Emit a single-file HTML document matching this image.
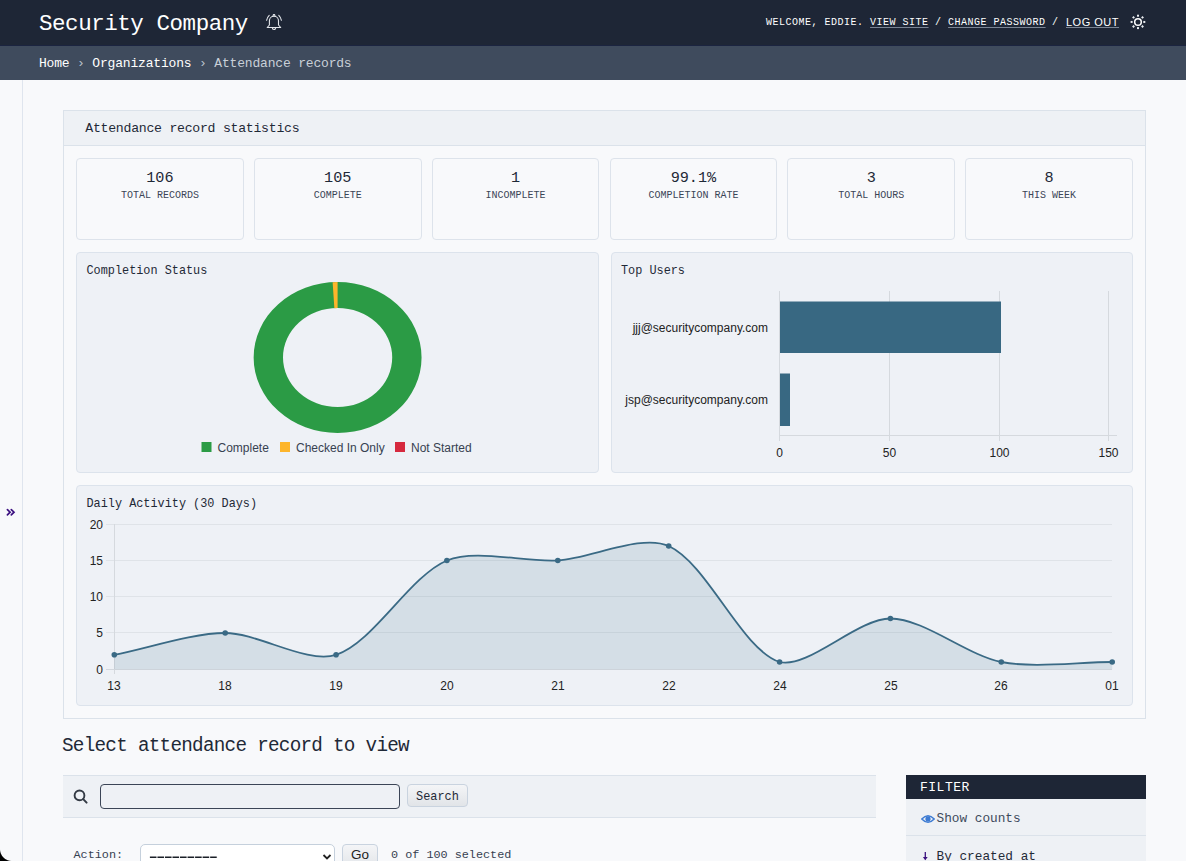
<!DOCTYPE html>
<html><head><meta charset="utf-8">
<style>
*{box-sizing:border-box;margin:0;padding:0}
html,body{width:1186px;height:861px;overflow:hidden}
body{background:#f8f9fb;font-family:"Liberation Mono",monospace;color:#1f2937;position:relative}
.abs{position:absolute}
#header{left:0;top:0;width:1186px;height:46px;background:#1e2636;border-bottom:1px solid #1b2440}
#brand{left:39px;top:10px;font-size:22.5px;letter-spacing:-0.45px;color:#fff;white-space:nowrap;line-height:28px}
#usertools{left:766px;top:16px;font-size:10px;letter-spacing:0.5px;color:#fff;white-space:nowrap;line-height:14px}
#usertools a{color:#fff;text-decoration:underline;text-decoration-color:#7a8494;text-underline-offset:2px;text-decoration-thickness:1px}
#logout{left:1066px;top:15px;font-family:"Liberation Sans",sans-serif;font-size:11px;letter-spacing:0.5px;color:#fff;line-height:14px;text-decoration:underline;text-decoration-color:#7a8494;text-underline-offset:1px;text-decoration-thickness:1px;white-space:nowrap}
#crumbs{left:0;top:46px;width:1186px;height:34px;background:#3f4b5d}
#crumbtext{left:39px;top:56px;font-size:13px;letter-spacing:-0.18px;color:#fff;white-space:nowrap;line-height:16px}
#crumbtext .sep{color:#b9c1cc}
#crumbtext .cur{color:#c9d0d8}
#toggle{left:0;top:80px;width:23px;height:781px;border-right:1px solid #dfe5ee;background:#f8f9fb}
#tog{left:6px;top:503px;font-size:15px;font-weight:bold;color:#3c1280;line-height:18px}
#module{left:63px;top:110px;width:1083px;height:609px;border:1px solid #dbe2ea;background:#f8f9fb}
#modhead{left:0;top:0;width:1081px;height:35px;background:#eef1f5;border-bottom:1px solid #dbe2ea}
#modtitle{left:21.3px;top:10px;font-size:13.2px;color:#1f2937;line-height:16px;white-space:nowrap;letter-spacing:-0.27px}
.card{position:absolute;top:47px;width:167.83px;height:82px;border:1px solid #dde3eb;border-radius:4px;background:#f8f9fb;text-align:center}
.card .num{position:absolute;left:0;right:0;top:9.5px;font-size:15.2px;line-height:18px;color:#1f2937}
.card .lbl{position:absolute;left:0;right:0;top:30.5px;font-size:10px;line-height:12px;color:#3b4556}
.ccard{position:absolute;border:1px solid #dce3ec;border-radius:4px;background:#eef1f6}
.ctitle{position:absolute;left:9.5px;top:11px;font-size:11.85px;line-height:14px;color:#1f2937;white-space:nowrap}
svg text{font-family:"Liberation Sans",sans-serif}
#h2{left:62px;top:734.5px;font-size:19.3px;letter-spacing:-0.73px;color:#1f2937;line-height:22px;white-space:nowrap}
#toolbar{left:63px;top:775px;width:813px;height:43px;background:#eef1f5;border-top:1px solid #dbe2ea;border-bottom:1px solid #dbe2ea}
#search{left:100px;top:784px;width:300px;height:25px;border:1px solid #3b4556;border-radius:4px;background:#eef1f5}
#sbtn{left:407px;top:784px;width:61px;height:23px;border:1px solid #c9d3df;border-radius:4px;background:linear-gradient(#f4f5f7,#e1e4e8);font-size:11.9px;line-height:25px;text-align:center;color:#1f2937}
#filter{left:906px;top:775px;width:240px;height:86px;background:#eef1f5}
#filhead{left:0;top:0;width:240px;height:24px;background:#1e2636;color:#fff;font-size:13px;letter-spacing:0.5px;line-height:26px;padding-left:14px}
#showc{left:30.5px;top:36px;font-size:12.75px;line-height:16px;color:#3d4a5c;white-space:nowrap}
#fsep{left:0;top:60px;width:240px;height:1px;background:#dbe2ea}
#bycr{left:30.5px;top:74px;font-size:12.75px;line-height:16px;color:#1f2937;white-space:nowrap}
#action{left:73.5px;top:846.7px;font-size:11.8px;color:#374151;line-height:16px;white-space:nowrap}
#select{left:140px;top:844px;width:195px;height:26px;border:1px solid #c5d0dc;border-radius:5px;background:#fff}
#gobtn{left:342px;top:844px;width:36px;height:26px;border:1px solid #c9d3df;border-radius:4px;background:linear-gradient(#f4f5f7,#e1e4e8)}
#selcount{left:391px;top:846.7px;font-size:11.8px;color:#374151;line-height:16px;white-space:nowrap}
</style></head>
<body>
<div id="header" class="abs"></div>
<div id="brand" class="abs">Security Company</div>
<svg class="abs" style="left:260px;top:8px" width="30" height="28" viewBox="0 0 30 28" fill="none" stroke="#e2e5ea" stroke-width="1.1" stroke-linecap="round" stroke-linejoin="round">
<path d="M9.4 17 V12.8 A4.55 4.55 0 0 1 18.5 12.8 V17 L20.7 19.5 H7.2 Z"/><path d="M12.9 8.4 L13.5 6.5 H14.5 L15.1 8.4"/><path d="M12.3 19.8 a1.7 1.7 0 0 0 3.4 0"/><path d="M9.2 7.3 Q7 9.5 6.6 12.3 M18.8 7.3 Q21 9.5 21.4 12.3"/>
</svg>
<div id="usertools" class="abs">WELCOME, <b style="font-weight:normal">EDDIE</b>. <a>VIEW SITE</a> / <a>CHANGE PASSWORD</a> / </div>
<div id="logout" class="abs">LOG OUT</div>
<svg class="abs" style="left:1128px;top:12px" width="20" height="20" viewBox="0 0 20 20">
<circle cx="10" cy="9.95" r="3.3" fill="none" stroke="#fff" stroke-width="1.5"/>
<g fill="#e8ebef"><rect x="9" y="2.7" width="2" height="2"/><rect x="9" y="15.1" width="2" height="2"/><rect x="2.6" y="8.95" width="2" height="2"/><rect x="15.3" y="8.95" width="2" height="2"/>
<rect x="4.5" y="4.4" width="2" height="2" transform="rotate(45 5.5 5.4)"/><rect x="13.5" y="4.4" width="2" height="2" transform="rotate(45 14.5 5.4)"/><rect x="4.5" y="13.5" width="2" height="2" transform="rotate(45 5.5 14.5)"/><rect x="13.5" y="13.5" width="2" height="2" transform="rotate(45 14.5 14.5)"/></g>
</svg>
<div id="crumbs" class="abs"></div>
<div id="crumbtext" class="abs">Home <span class="sep">›</span> Organizations <span class="sep">›</span> <span class="cur">Attendance records</span></div>
<div id="toggle" class="abs"></div>
<svg class="abs" style="left:0;top:500px" width="22" height="22" viewBox="0 0 22 22"><path d="M7.4 9.6 L10.1 12.2 L7.4 14.8 M11.3 9.6 L14 12.2 L11.3 14.8" fill="none" stroke="#3b1080" stroke-width="1.7" stroke-linecap="round" stroke-linejoin="miter"/></svg>

<div id="module" class="abs">
 <div id="modhead" class="abs"><div id="modtitle" class="abs">Attendance record statistics</div></div>
 <div class="card" style="left:12px"><div class="num">106</div><div class="lbl">TOTAL RECORDS</div></div>
 <div class="card" style="left:189.83px"><div class="num">105</div><div class="lbl">COMPLETE</div></div>
 <div class="card" style="left:367.67px"><div class="num">1</div><div class="lbl">INCOMPLETE</div></div>
 <div class="card" style="left:545.5px"><div class="num">99.1%</div><div class="lbl">COMPLETION RATE</div></div>
 <div class="card" style="left:723.33px"><div class="num">3</div><div class="lbl">TOTAL HOURS</div></div>
 <div class="card" style="left:901.17px"><div class="num">8</div><div class="lbl">THIS WEEK</div></div>
 <div class="ccard" style="left:12px;top:141px;width:522.5px;height:221px"><div class="ctitle">Completion Status</div></div>
 <div class="ccard" style="left:546.5px;top:141px;width:522.5px;height:221px"><div class="ctitle">Top Users</div></div>
 <div class="ccard" style="left:12px;top:374px;width:1057px;height:221px"><div class="ctitle">Daily Activity (30 Days)</div></div>
</div>

<!-- charts overlay (page coords) -->
<svg class="abs" style="left:0;top:0" width="1186" height="861" viewBox="0 0 1186 861">
 <!-- donut -->
 <g>
  <path fill="#2b9b45" fill-rule="evenodd" d="M337.6 282.1 A83.9 75.4 0 1 1 337.6 432.9 A83.9 75.4 0 1 1 337.6 282.1 Z M337.6 308.1 A54.6 49.4 0 1 0 337.6 406.9 A54.6 49.4 0 1 0 337.6 308.1 Z"/>
  <path fill="#fdb52b" d="M332.63 282.23 A83.9 75.4 0 0 1 337.60 282.10 L337.60 308.10 A54.6 49.4 0 0 0 334.37 308.19 Z"/>
 </g>
 <!-- legend -->
 <rect x="201.5" y="442" width="10" height="10" fill="#2b9b45"/>
 <text x="217.5" y="451.5" font-size="12" fill="#374151">Complete</text>
 <rect x="280" y="442" width="10" height="10" fill="#fdb52b"/>
 <text x="296" y="451.5" font-size="12" fill="#374151">Checked In Only</text>
 <rect x="395" y="442" width="10" height="10" fill="#d6293e"/>
 <text x="411" y="451.5" font-size="12" fill="#374151">Not Started</text>

 <!-- bar chart -->
 <g stroke="#d5d9de" stroke-width="1">
  <line x1="779.5" y1="291" x2="779.5" y2="441"/>
  <line x1="889.5" y1="291" x2="889.5" y2="441"/>
  <line x1="999.5" y1="291" x2="999.5" y2="441"/>
  <line x1="1108.5" y1="291" x2="1108.5" y2="441"/>
  <line x1="779" y1="435.5" x2="1117" y2="435.5"/>
 </g>
 <rect x="780" y="301.5" width="221" height="51.5" fill="#386882"/>
 <rect x="780" y="373.5" width="10" height="52.5" fill="#386882"/>
 <text x="768" y="331.5" font-size="12" fill="#222" text-anchor="end">jjj@securitycompany.com</text>
 <text x="768" y="403.5" font-size="12" fill="#222" text-anchor="end">jsp@securitycompany.com</text>
 <g font-size="12" fill="#222" text-anchor="middle">
  <text x="779.5" y="456.5">0</text><text x="889.5" y="456.5">50</text><text x="999.5" y="456.5">100</text><text x="1108.5" y="456.5">150</text>
 </g>

 <!-- line chart -->
 <g stroke="#dfe3e8" stroke-width="1">
  <line x1="106" y1="524.5" x2="1112" y2="524.5"/>
  <line x1="106" y1="560.5" x2="1112" y2="560.5"/>
  <line x1="106" y1="596.5" x2="1112" y2="596.5"/>
  <line x1="106" y1="632.5" x2="1112" y2="632.5"/>
  <line x1="106" y1="669.5" x2="1112" y2="669.5" stroke="#d3d8de"/>
  <line x1="114.5" y1="524" x2="114.5" y2="674" stroke="#d5d9de"/>
 </g>
 <path fill="rgba(60,106,132,0.14)" d="M114.3 654.8 C147.6 648.3 191.9 633.0 225.2 633.0 C258.4 633.0 307.0 664.3 336.1 654.8 C373.5 642.6 409.2 576.6 446.9 560.5 C475.7 548.3 524.7 562.7 557.8 560.5 C591.2 558.4 641.4 533.5 668.7 546.0 C707.9 564.0 741.4 649.6 779.6 662.0 C807.9 669.3 857.2 618.5 890.4 618.5 C923.7 618.5 966.9 655.3 1001.3 662.0 C1033.4 668.3 1078.9 662.0 1112.2 662.0 L1112.2 669.3 L114.3 669.3 Z"/>
 <path fill="none" stroke="#3a6a85" stroke-width="1.8" d="M114.3 654.8 C147.6 648.3 191.9 633.0 225.2 633.0 C258.4 633.0 307.0 664.3 336.1 654.8 C373.5 642.6 409.2 576.6 446.9 560.5 C475.7 548.3 524.7 562.7 557.8 560.5 C591.2 558.4 641.4 533.5 668.7 546.0 C707.9 564.0 741.4 649.6 779.6 662.0 C807.9 669.3 857.2 618.5 890.4 618.5 C923.7 618.5 966.9 655.3 1001.3 662.0 C1033.4 668.3 1078.9 662.0 1112.2 662.0"/>
 <g fill="#3a6a85">
  <circle cx="114.3" cy="654.8" r="2.8"/><circle cx="225.2" cy="633.0" r="2.8"/><circle cx="336.1" cy="654.8" r="2.8"/><circle cx="446.9" cy="560.5" r="2.8"/><circle cx="557.8" cy="560.5" r="2.8"/><circle cx="668.7" cy="546.0" r="2.8"/><circle cx="779.6" cy="662.0" r="2.8"/><circle cx="890.4" cy="618.5" r="2.8"/><circle cx="1001.3" cy="662.0" r="2.8"/><circle cx="1112.2" cy="662.0" r="2.8"/>
 </g>
 <g font-size="12" fill="#222" text-anchor="end">
  <text x="103" y="528.5">20</text><text x="103" y="564.5">15</text><text x="103" y="600.5">10</text><text x="103" y="636.5">5</text><text x="103" y="673.5">0</text>
 </g>
 <g font-size="12" fill="#222" text-anchor="middle">
  <text x="114" y="689.5">13</text><text x="225" y="689.5">18</text><text x="336" y="689.5">19</text><text x="447" y="689.5">20</text><text x="558" y="689.5">21</text><text x="669" y="689.5">22</text><text x="780" y="689.5">24</text><text x="891" y="689.5">25</text><text x="1001" y="689.5">26</text><text x="1112" y="689.5">01</text>
 </g>
</svg>

<div id="h2" class="abs">Select attendance record to view</div>
<div id="toolbar" class="abs"></div>
<svg class="abs" style="left:73px;top:788.7px" width="16" height="16" viewBox="0 0 16 16"><circle cx="6.5" cy="6.4" r="4.9" fill="none" stroke="#333a44" stroke-width="1.9"/><path d="M10.2 10.1 L13.6 13.6" stroke="#333a44" stroke-width="2" stroke-linecap="round"/></svg>
<div id="search" class="abs"></div>
<div id="sbtn" class="abs">Search</div>
<div id="filter" class="abs">
 <div id="filhead" class="abs">FILTER</div>
 <svg class="abs" style="left:14.5px;top:38.5px" width="14" height="10" viewBox="0 0 14 10"><path d="M0.8 5 Q7 -1.6 13.2 5 Q7 11.6 0.8 5 Z" fill="none" stroke="#3d7bd3" stroke-width="1.5"/><circle cx="7" cy="4.9" r="2.6" fill="#3d7bd3"/></svg>
 <div id="showc" class="abs">Show counts</div>
 <div id="fsep" class="abs"></div>
 <div id="bycr" class="abs">By created at</div>
 <svg class="abs" style="left:16px;top:76px" width="8" height="10" viewBox="0 0 8 10"><path d="M3.3 1 V8.3" fill="none" stroke="#3c1280" stroke-width="1.3"/><path d="M0.9 6 L3.3 9.2 L5.7 6 Z" fill="#3c1280"/></svg>
</div>
<div id="action" class="abs">Action:</div>
<div id="select" class="abs"><svg style="position:absolute;left:8px;top:10px" width="70" height="4" viewBox="0 0 70 4"><path d="M0.9 2.2 H68.7" stroke="#1a1f27" stroke-width="1.6" stroke-dasharray="6.6 0.93"/></svg><svg style="position:absolute;left:181px;top:8px" width="10" height="8" viewBox="0 0 10 8"><path d="M1.5 2 L5 5.5 L8.5 2" fill="none" stroke="#222" stroke-width="1.8"/></svg></div>
<div id="gobtn" class="abs"><div style="position:absolute;left:0;right:0;top:1px;text-align:center;font-family:'Liberation Sans',sans-serif;font-size:13.5px;line-height:18px;color:#222">Go</div></div>
<div id="selcount" class="abs">0 of 100 selected</div>
<div class="abs" style="left:0;top:849px;width:12px;height:12px;background:radial-gradient(circle at 12px 0, rgba(0,0,0,0) 11.5px, #000 12.5px)"></div>
</body></html>
